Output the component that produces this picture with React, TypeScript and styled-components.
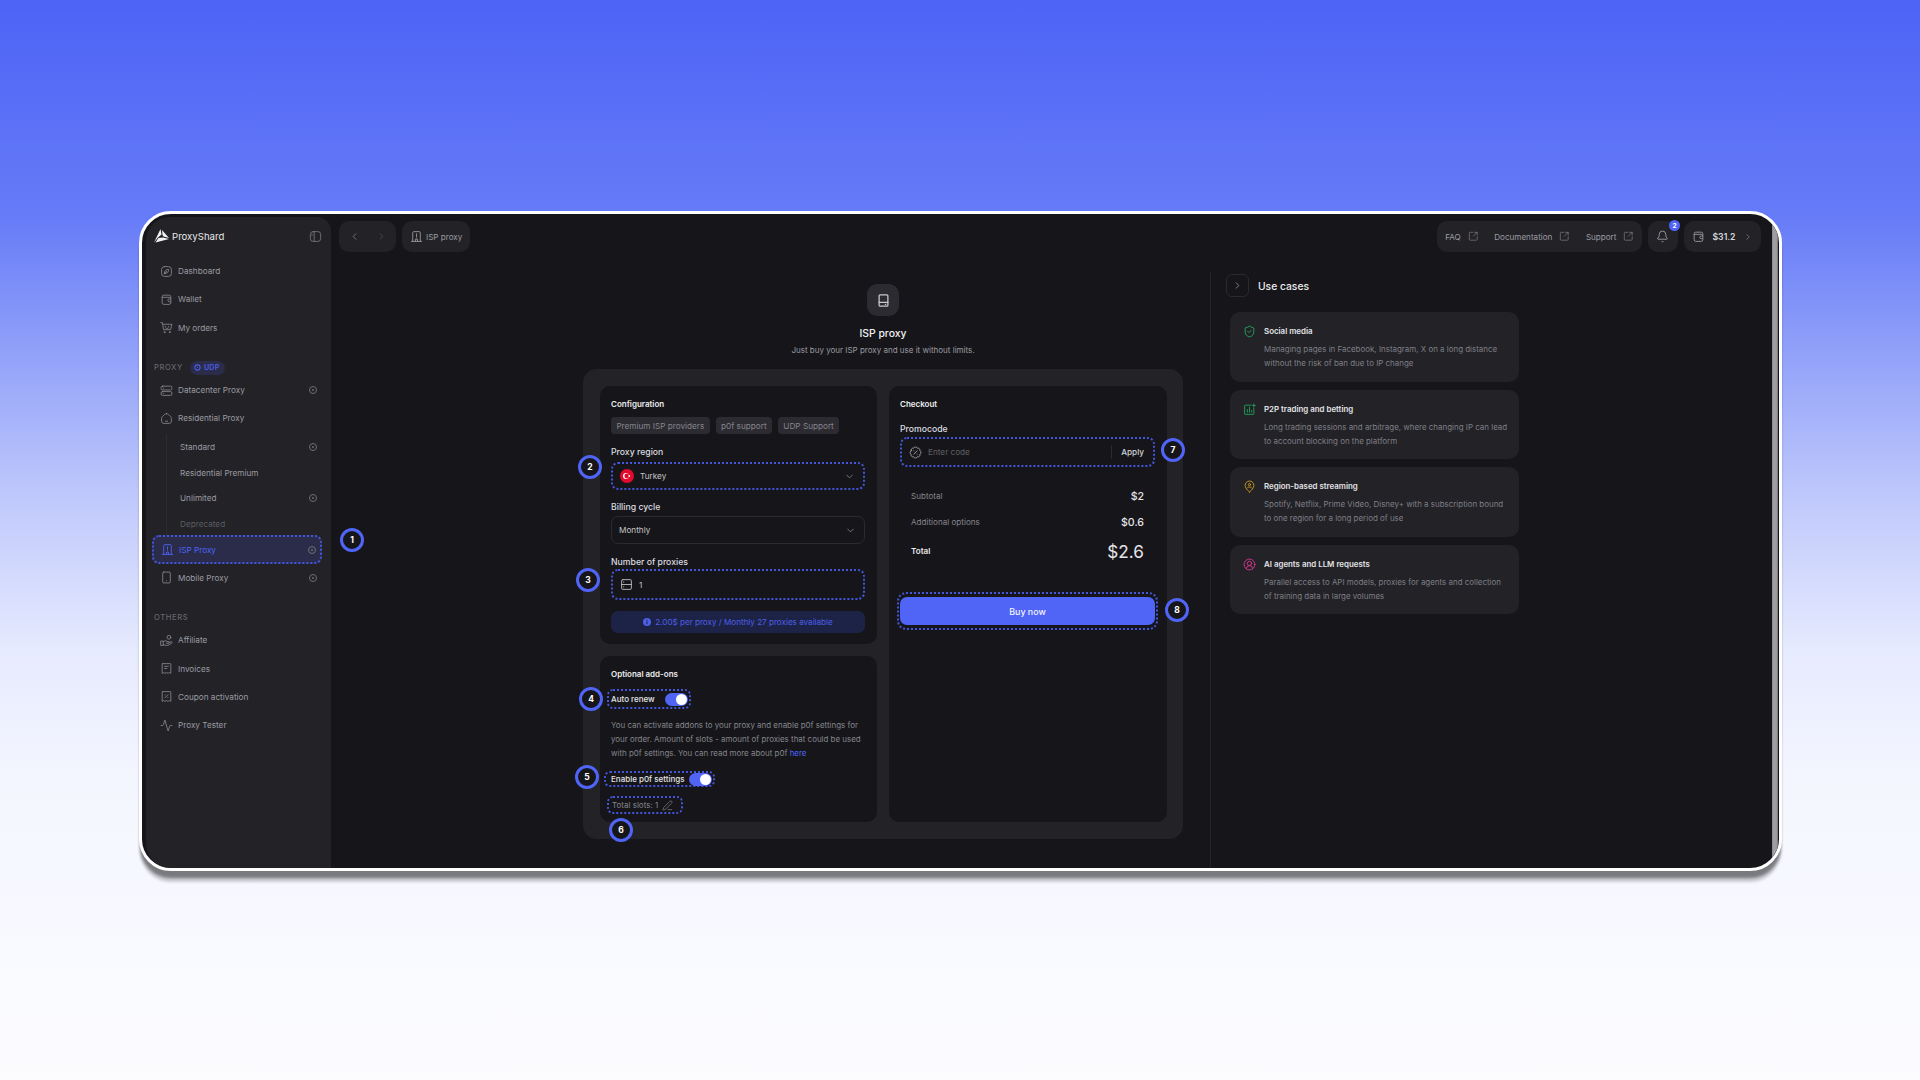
import React from 'react';
import styled, { createGlobalStyle } from 'styled-components';
import {
  ChevronLeft, ChevronRight, ChevronDown, SquareArrowOutUpRight, Bell,
  Smartphone, Activity, BadgePercent, PenLine, ShieldCheck, CircleUserRound,
} from 'lucide-react';

const accent = '#5064f6';
const ink = '#16161a';
const panel = '#222227';
const dotted = `2px dotted #4456dc`;

const Global = createGlobalStyle`
  html, body { margin: 0; padding: 0; }
  body { font-family: Inter, "Liberation Sans", sans-serif; -webkit-font-smoothing: antialiased; }
  * { box-sizing: border-box; }
`;

const Page = styled.div`
  width: 1920px;
  height: 1080px;
  overflow: hidden;
  padding: 211px 0 0 139px;
  background: linear-gradient(180deg, #4d63f6 0%, #667bf7 20%, #bcc6fb 45%, #e6eafe 60%, #f4f6ff 72%, #fcfcff 100%);
`;

const Frame = styled.div`
  width: 1643px;
  height: 660px;
  border: 3px solid #fff;
  border-radius: 32px;
  background: ${ink};
  box-shadow: 0 8px 3px -1px rgba(0, 0, 0, 0.4), 0 12px 3px -1px rgba(0, 0, 0, 0.18);
  overflow: hidden;
  display: flex;
`;

const Gutter = styled.div`
  width: 4px;
  flex: none;
`;

const Side = styled.aside`
  width: 185px;
  flex: none;
  margin-top: 3px;
  padding: 0 9px 0 6px;
  background: ${panel};
  border-radius: 24px 14px 0 24px;
`;

const Brand = styled.div`
  height: 38px;
  display: flex;
  align-items: center;
  gap: 3px;
  padding: 0 0 0 2px;
  margin-bottom: 2px;
  color: #e8e8ea;
  font-size: 9.6px;
  font-weight: 400;
`;

const BrandName = styled.span`
  flex: 1;
`;

const Collapse = styled.span`
  display: flex;
  color: #77777d;
`;

const SectionLabel = styled.div`
  height: 17px;
  margin-top: ${p => p.$gap}px;
  padding: ${p => p.$pt ?? 0}px 0 1px 2px;
  display: flex;
  align-items: center;
  gap: 7px;
  color: #66666c;
  font-size: 7.6px;
  font-weight: 500;
  letter-spacing: 0.6px;
`;

const UdpTag = styled.span`
  height: 14px;
  padding: 0 5px 0 4px;
  border-radius: 7px;
  display: inline-flex;
  align-items: center;
  gap: 3px;
  background: #2a2c4a;
  color: #4d5fe6;
  font-size: 7px;
  font-weight: 600;
  letter-spacing: 0.3px;
`;

const Item = styled.div`
  height: ${p => (p.$sub ? 25.5 : 28.3)}px;
  display: flex;
  align-items: center;
  gap: 5px;
  padding: 0 ${p => (p.$active ? 4 : 5)}px 0 ${p => (p.$sub ? 13 : p.$active ? 7 : 8)}px;
  border-radius: 7px;
  font-size: 8.2px;
  color: ${p => (p.$active ? accent : p.$muted ? '#5c5c62' : '#9b9ba1')};
  background: ${p => (p.$active ? '#2a2c4a' : 'transparent')};
  border: ${p => (p.$active ? dotted : 'none')};
  position: relative;
  white-space: nowrap;
  & > svg:first-child { color: ${p => (p.$active ? accent : '#85858b')}; flex: none; }
`;

const ItemText = styled.span`
  flex: 1;
`;

const Dot = styled.span`
  width: 8px;
  height: 8px;
  border: 1px solid #6e6e74;
  border-radius: 50%;
  position: relative;
  flex: none;
  &::after {
    content: '';
    position: absolute;
    left: 2px;
    top: 2px;
    width: 2px;
    height: 2px;
    border-radius: 50%;
    background: #6e6e74;
  }
`;

const SubGroup = styled.div`
  margin: 2px 0 -1px 14px;
  border-left: 1px solid #2c2c31;
`;

const Main = styled.div`
  flex: 1;
  min-width: 0;
  display: flex;
  flex-direction: column;
`;

const TopBar = styled.header`
  height: 38px;
  margin-bottom: 20px;
  padding: 7px 11px 0 8px;
  display: flex;
  align-items: flex-start;
  gap: 6px;
`;

const Chip = styled.div`
  height: 31px;
  padding: 0 ${p => p.$px ?? 9}px;
  border-radius: 10px;
  background: ${panel};
  display: flex;
  align-items: center;
  gap: ${p => p.$gap ?? 5}px;
  color: #9c9ca2;
  font-size: 8.1px;
  position: relative;
  & > svg { flex: none; }
`;

const Spacer = styled.div`
  flex: 1;
`;

const LinkGroup = styled.span`
  display: flex;
  align-items: center;
  gap: 7px;
`;

const Count = styled.span`
  position: absolute;
  right: -2px;
  top: -1px;
  width: 11px;
  height: 11px;
  border-radius: 50%;
  background: ${accent};
  color: #fff;
  font-size: 6.5px;
  font-weight: 700;
  display: flex;
  align-items: center;
  justify-content: center;
`;

const Money = styled.b`
  color: #d6d6da;
  font-weight: 600;
  font-size: 8.7px;
`;

const Body = styled.div`
  flex: 1;
  display: flex;
  min-height: 0;
`;

const Center = styled.main`
  width: 879px;
  flex: none;
  padding: 12px 27px 0 252px;
`;

const Hero = styled.div`
  display: flex;
  flex-direction: column;
  align-items: center;
  margin-bottom: 13px;
`;

const HeroIcon = styled.div`
  width: 32px;
  height: 32px;
  border-radius: 10px;
  background: #2b2b31;
  color: #c9c9cd;
  display: flex;
  align-items: center;
  justify-content: center;
  margin-bottom: 11px;
`;

const HeroTitle = styled.h1`
  margin: 0 0 3px;
  color: #f0f0f2;
  font-size: 10.4px;
  line-height: 14px;
  font-weight: 500;
`;

const HeroSub = styled.p`
  margin: 0;
  color: #9a9aa0;
  font-size: 8px;
  line-height: 12px;
`;

const Panel = styled.section`
  height: 470px;
  padding: 17px 16px 17px 17px;
  border-radius: 14px;
  background: ${panel};
  display: grid;
  grid-template-columns: 277px 278px;
  gap: 12px;
`;

const Column = styled.div`
  display: flex;
  flex-direction: column;
  gap: 12px;
`;

const Card = styled.div`
  background: ${ink};
  border-radius: 10px;
  padding: 12px 12px 0 11px;
  flex: ${p => (p.$h ? 'none' : 1)};
  height: ${p => (p.$h ? `${p.$h}px` : 'auto')};
`;

const CardTitle = styled.h2`
  margin: 0;
  height: 12px;
  line-height: 12px;
  color: #ececee;
  font-size: 8px;
  font-weight: 600;
`;

const Tags = styled.div`
  display: flex;
  gap: 6px;
  margin-top: 7px;
`;

const Tag = styled.span`
  height: 17px;
  padding: 0 5.4px;
  border-radius: 4px;
  background: #2b2b31;
  color: #85858c;
  font-size: 8.2px;
  display: flex;
  align-items: center;
`;

const Label = styled.div`
  height: 12px;
  line-height: 12px;
  margin-top: ${p => p.$mt}px;
  margin-bottom: ${p => p.$mb ?? 3}px;
  color: #dcdce0;
  font-size: 8.7px;
  font-weight: 500;
`;

const Field = styled.div`
  height: ${p => p.$h ?? 28}px;
  padding: 0 ${p => p.$pr ?? 8}px 0 7px;
  border-radius: 7px;
  border: ${p => (p.$dotted ? dotted : '1px solid #2a2a2f')};
  display: flex;
  align-items: center;
  gap: 6px;
  color: #c4c4c8;
  font-size: 8.2px;
  position: relative;
`;

const FieldValue = styled.span`
  flex: 1;
`;

const Placeholder = styled.span`
  flex: 1;
  color: #5e5e64;
`;

const Apply = styled.span`
  height: 14px;
  padding-left: 9px;
  border-left: 1px solid #2a2a2f;
  display: flex;
  align-items: center;
  color: #d4d4d8;
  font-size: 8.2px;
  font-weight: 500;
`;

const Caret = styled(ChevronDown)`
  color: #7a7a80;
`;

const Notice = styled.div`
  height: 22px;
  margin-top: 11px;
  border-radius: 7px;
  background: #1d2346;
  color: #4d5fe6;
  font-size: 8.1px;
  display: flex;
  align-items: center;
  justify-content: center;
  gap: 4px;
`;

const ToggleRow = styled.div`
  display: inline-flex;
  align-items: center;
  height: ${p => p.$h}px;
  width: ${p => p.$w}px;
  justify-content: space-between;
  margin: ${p => p.$m};
  padding: 0 1px 0 ${p => p.$pl}px;
  border: ${dotted};
  border-radius: 6px;
  color: #e4e4e8;
  font-size: 8px;
  font-weight: 500;
  position: relative;
`;

const Toggle = styled.span`
  width: 23px;
  height: 13px;
  border-radius: 7px;
  background: ${accent};
  position: relative;
  flex: none;
  &::after {
    content: '';
    position: absolute;
    right: 1px;
    top: 1px;
    width: 11px;
    height: 11px;
    border-radius: 50%;
    background: #fff;
  }
`;

const Para = styled.p`
  margin: 9px 0 6px;
  color: #85858c;
  font-size: 7.95px;
  line-height: 14px;
`;

const Here = styled.a`
  color: ${accent};
`;

const Slots = styled.div`
  width: 76px;
  height: 18px;
  margin: 9px 0 0 -4px;
  padding-left: 3px;
  border: ${dotted};
  border-radius: 6px;
  display: flex;
  align-items: center;
  gap: 4px;
  color: #85858c;
  font-size: 8px;
  position: relative;
`;

const Summary = styled.div`
  margin-top: 18px;
  padding: 0 11px;
  display: flex;
  flex-direction: column;
  gap: 4px;
`;

const SumRow = styled.div`
  height: ${p => (p.$total ? 28 : 22)}px;
  display: flex;
  align-items: center;
  justify-content: space-between;
  color: ${p => (p.$total ? '#e8e8ec' : '#85858c')};
  font-size: 8.1px;
  font-weight: ${p => (p.$total ? 600 : 400)};
`;

const SumValue = styled.span`
  color: #e4e4e8;
  font-size: ${p => (p.$big ? 17.2 : 10.6)}px;
  font-weight: ${p => (p.$big ? 400 : 500)};
`;

const BuyWrap = styled.div`
  height: 38px;
  width: 261px;
  margin: 27px 0 0 -3px;
  padding: 3px 1px;
  border: ${dotted};
  border-radius: 9px;
  position: relative;
`;

const Buy = styled.button`
  width: 100%;
  height: 28px;
  border: none;
  border-radius: 7px;
  background: ${accent};
  color: #f2f3ff;
  font-family: inherit;
  font-size: 8.9px;
  font-weight: 500;
`;

const Cases = styled.aside`
  flex: 1;
  border-left: 1px solid #252529;
  padding: 2px 0 0 15px;
`;

const CasesHead = styled.div`
  display: flex;
  align-items: center;
  gap: 9px;
  color: #ececee;
  font-size: 10.3px;
  font-weight: 500;
  margin-bottom: 15px;
`;

const CasesToggle = styled.span`
  width: 23px;
  height: 23px;
  border: 1px solid #2a2a2e;
  border-radius: 6px;
  display: flex;
  align-items: center;
  justify-content: center;
  color: #85858b;
`;

const CaseList = styled.div`
  width: 289px;
  margin-left: 4px;
  display: flex;
  flex-direction: column;
  gap: 8px;
`;

const CaseCard = styled.article`
  height: 69.5px;
  padding: 13px 10px 0 13px;
  border-radius: 10px;
  background: ${panel};
  display: grid;
  grid-template-columns: 21px 1fr;
`;

const CaseIcon = styled.div`
  color: ${p => p.$c};
  display: flex;
`;

const CaseTitle = styled.h3`
  margin: 0 0 5px;
  height: 12px;
  line-height: 12px;
  color: #e4e4e8;
  font-size: 7.9px;
  font-weight: 600;
`;

const CaseText = styled.p`
  margin: 0;
  color: #7f7f86;
  font-size: 7.95px;
  line-height: 14px;
  white-space: nowrap;
`;

const Badge = styled.span`
  position: absolute;
  left: ${p => p.$x}px;
  top: ${p => p.$y}px;
  width: 24px;
  height: 24px;
  border: 3px solid ${accent};
  border-radius: 50%;
  background: ${ink};
  color: #fff;
  font-size: 8.5px;
  font-weight: 700;
  display: flex;
  align-items: center;
  justify-content: center;
  z-index: 2;
`;

const Svg = styled.svg.attrs(p => ({
  viewBox: '0 0 24 24',
  width: p.$s ?? 13,
  height: p.$s ?? 13,
  fill: 'none',
  stroke: 'currentColor',
  strokeWidth: 1.6,
  strokeLinecap: 'round',
  strokeLinejoin: 'round',
}))`
  flex: none;
`;

const Logo = () => (
  <svg width="15" height="14" viewBox="0 0 30 28" fill="#f2f2f4">
    <path d="M13 0 L15 11 L8 17 L0 27 Z" />
    <path d="M16 2 L30 18 L19 15 L17 12 Z" />
    <path d="M9 18 L18 17 L30 20 L3 27 Z" />
  </svg>
);

const IconDash = () => <Svg><rect x="3" y="3" width="18" height="18" rx="5" /><path d="M8 16c0-5 3-8 8-8 0 5-3 8-8 8zM8 16l4-4" /></Svg>;
const IconWallet = () => <Svg><path d="M20 9V7a3 3 0 0 0-3-3H7a3 3 0 0 0-3 3v11a3 3 0 0 0 3 3h10a3 3 0 0 0 3-3v-2" /><path d="M4 8h13a3 3 0 0 1 3 3v5h-3a2.5 2.5 0 0 1 0-5h3" /></Svg>;
const IconCart = () => <Svg><path d="M1.5 3h3l2 13h13l2.5-10H5.5" /><circle cx="8.5" cy="20.5" r="1" /><circle cx="18" cy="20.5" r="1" /><path d="M10 10v.5M16 10v.5M10.5 13c1 1 4 1 5 0" /></Svg>;
const IconServer = () => <Svg><rect x="2" y="4" width="20" height="7" rx="2.5" /><rect x="2" y="14" width="20" height="7" rx="2.5" /><path d="M6 7.5h.5M6 17.5h.5" /></Svg>;
const IconHome = () => <Svg><path d="M12 3c-2 0-3 1-5 3-2 1.600-4 3-4 6v5a4 4 0 0 0 4 4h10a4 4 0 0 0 4-4v-5c0-3-2-4.400-4-6-2-2-3-3-5-3z" /><path d="M10 17h4" /></Svg>;
const IconBuilding = () => <Svg><path d="M5 21V5a2 2 0 0 1 2-2h10a2 2 0 0 1 2 2v16M2.500 21h19M10 21v-4h4v4M12 7v5M12 14.500v.2" /></Svg>;
const IconHand = () => <Svg><circle cx="16.500" cy="6" r="3.500" /><path d="M2 13h4v8H2zM6 14c3-2 5-2 7 0h3a1.500 1.500 0 0 1 0 3h-4M16 16.500l4-2c2-1 3 1 1.500 2.500L16 20.500c-3 1-7 .5-10-.5" /></Svg>;
const IconReceipt = () => <Svg><path d="M5 3h14a1 1 0 0 1 1 1v17l-2.500-1.500L15 21l-3-1.500L9 21l-2.500-1.500L4 21V4a1 1 0 0 1 1-1z" /><path d="M8.500 8h7M8.500 12h4" /></Svg>;
const IconCoupon = () => <Svg><path d="M5 3h14a1 1 0 0 1 1 1v17l-2.500-1.500L15 21l-3-1.500L9 21l-2.500-1.500L4 21V4a1 1 0 0 1 1-1z" /><path d="M9 14.500l6-6M9.500 9v.1M14.500 14v.1" /></Svg>;
const IconSideToggle = () => <Svg $s={13}><rect x="2.500" y="3" width="19" height="18" rx="5" /><path d="M9.500 3v18" /><path d="M5.500 8v2" /></Svg>;
const IconCard = () => <Svg $s={15} style={{ strokeWidth: 2 }}><rect x="5" y="3" width="14" height="18" rx="1.500" /><path d="M5 15h14M15 18h.5" /></Svg>;
const IconRows = () => <Svg><rect x="3" y="3" width="18" height="18" rx="2" /><path d="M3 12h18M6.500 7.500h.5M6.500 16.500h.5" /></Svg>;
const IconChart = () => <Svg $s={13}><path d="M20 9v11a1 1 0 0 1-1 1H4a1 1 0 0 1-1-1V5a1 1 0 0 1 1-1h11" /><path d="M8 17v-5M12 17V8M16 17v-3M20 2v5M17.500 4.500h5" /></Svg>;
const IconPin = () => <Svg $s={13}><path d="M12 22s8-5.500 8-12a8 8 0 1 0-16 0c0 6.500 8 12 8 12z" /><circle cx="12" cy="8.500" r="2" /><path d="M8.500 14c1.500-1.500 5.500-1.500 7 0" /></Svg>;
const IconInfo = () => (
  <svg width="8" height="8" viewBox="0 0 8 8">
    <circle cx="4" cy="4" r="4" fill="currentColor" />
    <rect x="3.500" y="3.400" width="1" height="2.800" fill="#1d2346" />
    <rect x="3.500" y="1.800" width="1" height="1" fill="#1d2346" />
  </svg>
);
const Flag = () => (
  <svg width="14" height="14" viewBox="0 0 14 14">
    <circle cx="7" cy="7" r="7" fill="#e30a2d" />
    <circle cx="6" cy="7" r="3" fill="#fff" />
    <circle cx="6.800" cy="7" r="2.400" fill="#e30a2d" />
    <circle cx="9.300" cy="7" r="0.900" fill="#fff" />
  </svg>
);

const Ext = () => <SquareArrowOutUpRight size={10.5} strokeWidth={1.5} color="#85858b" />;

const useCases = [
  { c: '#22a75f', icon: <ShieldCheck size={13} strokeWidth={1.7} />, t: 'Social media', d: ['Managing pages in Facebook, Instagram, X on a long distance', 'without the risk of ban due to IP change'] },
  { c: '#22a75f', icon: <IconChart />, t: 'P2P trading and betting', d: ['Long trading sessions and arbitrage, where changing IP can lead', 'to account blocking on the platform'] },
  { c: '#d9a420', icon: <IconPin />, t: 'Region-based streaming', d: ['Spotify, Netflix, Prime Video, Disney+ with a subscription bound', 'to one region for a long period of use'] },
  { c: '#d9368f', icon: <CircleUserRound size={13} strokeWidth={1.7} />, t: 'AI agents and LLM requests', d: ['Parallel access to API models, proxies for agents and collection', 'of training data in large volumes'] },
];

const RightEdge = styled.div`
  width: 6px;
  flex: none;
  margin-right: 1px;
  background: linear-gradient(90deg, #8a8a8e 0%, #a2a2a4 30%, #9a9a9c 80%, #6a6a6e 100%);
`;

export default function App() {
  return (
    <Page>
      <Global />
      <Frame>
        <Gutter />
        <Side>
          <Brand>
            <Logo />
            <BrandName>ProxyShard</BrandName>
            <Collapse><IconSideToggle /></Collapse>
          </Brand>
          <Item><IconDash /><ItemText>Dashboard</ItemText></Item>
          <Item><IconWallet /><ItemText>Wallet</ItemText></Item>
          <Item><IconCart /><ItemText>My orders</ItemText></Item>

          <SectionLabel $gap={17} $pt={2}>
            PROXY
            <UdpTag><Svg $s={7} style={{ strokeWidth: 3.5 }}><circle cx="12" cy="12" r="9" /><path d="M12 12h.1" /></Svg>UDP</UdpTag>
          </SectionLabel>
          <Item><IconServer /><ItemText>Datacenter Proxy</ItemText><Dot /></Item>
          <Item><IconHome /><ItemText>Residential Proxy</ItemText></Item>
          <SubGroup>
            <Item $sub><ItemText>Standard</ItemText><Dot /></Item>
            <Item $sub><ItemText>Residential Premium</ItemText></Item>
            <Item $sub><ItemText>Unlimited</ItemText><Dot /></Item>
            <Item $sub $muted><ItemText>Deprecated</ItemText></Item>
          </SubGroup>
          <Item $active>
            <IconBuilding /><ItemText>ISP Proxy</ItemText><Dot />
            <Badge $x={186} $y={-9}>1</Badge>
          </Item>
          <Item><Smartphone size={13} strokeWidth={1.6} /><ItemText>Mobile Proxy</ItemText><Dot /></Item>

          <SectionLabel $gap={17}>OTHERS</SectionLabel>
          <Item><IconHand /><ItemText>Affiliate</ItemText></Item>
          <Item><IconReceipt /><ItemText>Invoices</ItemText></Item>
          <Item><IconCoupon /><ItemText>Coupon activation</ItemText></Item>
          <Item><Activity size={13} strokeWidth={1.6} /><ItemText>Proxy Tester</ItemText></Item>
        </Side>

        <Main>
          <TopBar>
            <Chip $px={9.5} $gap={16}>
              <ChevronLeft size={11} color="#77777d" />
              <ChevronRight size={11} color="#4a4a50" />
            </Chip>
            <Chip $px={8} $gap={3}><IconBuilding />ISP proxy</Chip>
            <Spacer />
            <Chip $px={8} $gap={16}>
              <LinkGroup>FAQ <Ext /></LinkGroup>
              <LinkGroup>Documentation <Ext /></LinkGroup>
              <LinkGroup>Support <Ext /></LinkGroup>
            </Chip>
            <Chip $px={8.5}>
              <Bell size={13} strokeWidth={1.6} color="#a4a4aa" />
              <Count>2</Count>
            </Chip>
            <Chip $px={8} $gap={7.5}>
              <IconWallet />
              <Money>$31.2</Money>
              <ChevronRight size={10} color="#77777d" />
            </Chip>
          </TopBar>

          <Body>
            <Center>
              <Hero>
                <HeroIcon><IconCard /></HeroIcon>
                <HeroTitle>ISP proxy</HeroTitle>
                <HeroSub>Just buy your ISP proxy and use it without limits.</HeroSub>
              </Hero>
              <Panel>
                <Column>
                  <Card $h={258}>
                    <CardTitle>Configuration</CardTitle>
                    <Tags>
                      <Tag>Premium ISP providers</Tag>
                      <Tag>p0f support</Tag>
                      <Tag>UDP Support</Tag>
                    </Tags>
                    <Label $mt={12} $mb={4}>Proxy region</Label>
                    <Field $dotted>
                      <Badge $x={-35} $y={-9}>2</Badge>
                      <Flag />
                      <FieldValue>Turkey</FieldValue>
                      <Caret size={11} />
                    </Field>
                    <Label $mt={11}>Billing cycle</Label>
                    <Field>
                      <FieldValue>Monthly</FieldValue>
                      <Caret size={11} />
                    </Field>
                    <Label $mt={12} $mb={1}>Number of proxies</Label>
                    <Field $dotted $h={31}>
                      <Badge $x={-37} $y={-3}>3</Badge>
                      <IconRows />
                      <FieldValue>1</FieldValue>
                    </Field>
                    <Notice><IconInfo />2.00$ per proxy / Monthly 27 proxies available</Notice>
                  </Card>
                  <Card>
                    <CardTitle>Optional add-ons</CardTitle>
                    <ToggleRow $h={20} $w={84} $pl={2} $m="9px 0 0 -4px">
                      <Badge $x={-30} $y={-4}>4</Badge>
                      Auto renew <Toggle />
                    </ToggleRow>
                    <Para>
                      You can activate addons to your proxy and enable p0f settings for your order. Amount of slots - amount of proxies that could be used with p0f settings. You can read more about p0f <Here>here</Here>
                    </Para>
                    <ToggleRow $h={16} $w={111} $pl={5} $m="0 0 0 -7px">
                      <Badge $x={-31} $y={-8}>5</Badge>
                      Enable p0f settings <Toggle />
                    </ToggleRow>
                    <Slots>
                      Total slots: 1 <PenLine size={11} strokeWidth={1.5} />
                      <Badge $x={0} $y={20}>6</Badge>
                    </Slots>
                  </Card>
                </Column>
                <Card>
                  <CardTitle>Checkout</CardTitle>
                  <Label $mt={13} $mb={2}>Promocode</Label>
                  <Field $dotted $h={30} $pr={9}>
                    <Badge $x={259} $y={-1}>7</Badge>
                    <BadgePercent size={13} strokeWidth={1.4} />
                    <Placeholder>Enter code</Placeholder>
                    <Apply>Apply</Apply>
                  </Field>
                  <Summary>
                    <SumRow>Subtotal<SumValue>$2</SumValue></SumRow>
                    <SumRow>Additional options<SumValue>$0.6</SumValue></SumRow>
                    <SumRow $total>Total<SumValue $big>$2.6</SumValue></SumRow>
                  </Summary>
                  <BuyWrap>
                    <Badge $x={266} $y={4}>8</Badge>
                    <Buy>Buy now</Buy>
                  </BuyWrap>
                </Card>
              </Panel>
            </Center>

            <Cases>
              <CasesHead>
                <CasesToggle><ChevronRight size={11} /></CasesToggle>
                Use cases
              </CasesHead>
              <CaseList>
                {useCases.map(u => (
                  <CaseCard key={u.t}>
                    <CaseIcon $c={u.c}>{u.icon}</CaseIcon>
                    <div>
                      <CaseTitle>{u.t}</CaseTitle>
                      {u.d.map(l => <CaseText key={l}>{l}</CaseText>)}
                    </div>
                  </CaseCard>
                ))}
              </CaseList>
            </Cases>
          </Body>
        </Main>
        <RightEdge />
      </Frame>
    </Page>
  );
}
